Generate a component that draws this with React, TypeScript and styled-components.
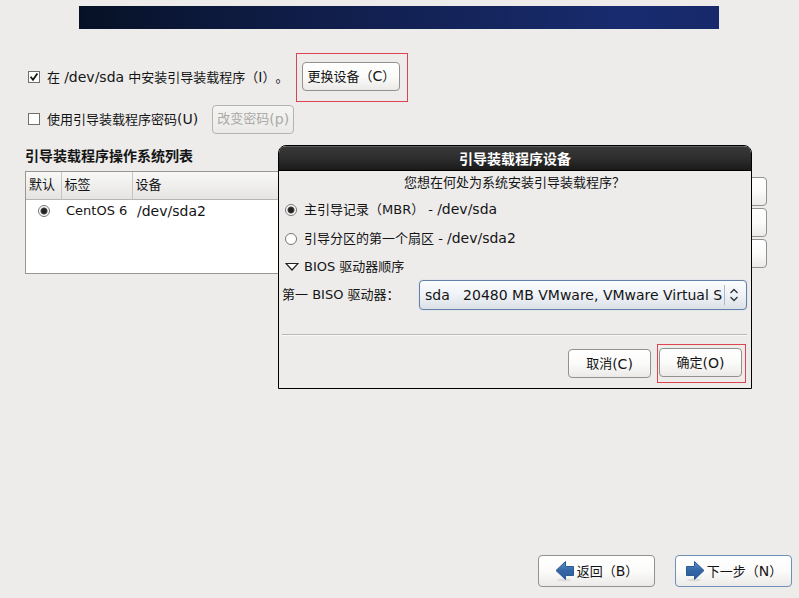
import React, { useState } from "react";
import styled, { createGlobalStyle, css } from "styled-components";

const GlobalStyle = createGlobalStyle`
  * { box-sizing: border-box; }
  body {
    margin: 0;
    background: #edeceb;
    color: #141414;
    font: 13px/20px "DejaVu Sans", "Noto Sans CJK SC", sans-serif;
    text-spacing-trim: space-all;
  }
  button, select, input { font: inherit; color: inherit; margin: 0; }
`;

const Page = styled.div`
  position: relative;
  display: flex;
  flex-direction: column;
  min-height: 100vh;
  padding-top: 6px;
`;

const Banner = styled.header`
  height: 23px;
  margin: 0 80px 0 79px;
  background: linear-gradient(90deg, #061025 0%, #0c1839 18%, #111f4e 42%, #15265e 65%, #182b6e 85%, #17296a 100%);
`;

const Main = styled.main`
  padding: 24px 32px 0 25px;
`;

const OptionRow = styled.div<{ $tall?: boolean }>`
  display: flex;
  align-items: center;
  gap: ${(p) => (p.$tall ? 8 : 14)}px;
  height: ${(p) => (p.$tall ? 48 : 36)}px;
  padding-left: 3px;
`;

const Choice = styled.label`
  display: flex;
  align-items: center;
  gap: 7px;
  white-space: nowrap;
`;

const Latin = styled.span`
  font-size: 14px;
`;

const Tick = styled.input.attrs({ type: "checkbox" })`
  appearance: none;
  flex: none;
  width: 12px;
  height: 12px;
  border: 1px solid #6f6f6c;
  background: #fff;
  &:checked {
    background: #fff
      url("data:image/svg+xml,%3Csvg xmlns='http://www.w3.org/2000/svg' viewBox='0 0 10 10'%3E%3Cpath d='M1.6 4.8 4 7.8 8.4 1.4' fill='none' stroke='%23111' stroke-width='1.7'/%3E%3C/svg%3E")
      center / 10px 10px no-repeat;
  }
`;

const Radio = styled.input.attrs({ type: "radio" })`
  appearance: none;
  flex: none;
  width: 12px;
  height: 12px;
  border: 1px solid #767674;
  border-radius: 50%;
  background: #fff;
  &:checked {
    background: radial-gradient(circle, #222 0 2px, #444 3px, #fff 4px);
  }
`;

const Button = styled.button<{ $width?: number; $large?: boolean; $focus?: boolean }>`
  display: flex;
  align-items: center;
  justify-content: center;
  gap: ${(p) => (p.$large ? 2 : 0)}px;
  flex: none;
  height: ${(p) => (p.$large ? 32 : 29)}px;
  ${(p) => p.$width && css`width: ${p.$width}px;`}
  padding: 0 4px;
  border: 1px solid ${(p) => (p.$focus ? "#7090b8" : "#91918e")};
  border-radius: 4px;
  background: linear-gradient(#ffffff, #fbfbfa 50%, #ebeae9);
  white-space: nowrap;
  &:disabled {
    border-color: #b4b3b1;
    background: linear-gradient(#f4f4f3, #ebeae8);
    color: #aaa9a7;
  }
`;

const Highlight = styled.div<{ $tight?: boolean }>`
  display: flex;
  border: 1px solid #dc4450;
  padding: ${(p) => (p.$tight ? "3px 3px 5px 1px" : "8px 7px 10px 5px")};
`;

const ListTitle = styled.h2`
  margin: 8px 0 6px;
  font-size: 14px;
  line-height: 20px;
  font-weight: 700;
  font-family: "Noto Sans CJK SC", sans-serif;
`;

const ListArea = styled.section`
  display: flex;
  gap: 6px;
`;

const TableFrame = styled.div`
  flex: 1;
  height: 103px;
  border: 1px solid #979794;
  background: #fff;
`;

const Table = styled.table`
  width: 100%;
  border-collapse: collapse;
  table-layout: fixed;
  th {
    height: 27px;
    padding: 0 3px;
    font-weight: 400;
    text-align: left;
    background: linear-gradient(#f8f8f7, #e5e4e2);
    border-bottom: 1px solid #b6b5b2;
  }
  th + th { border-left: 1px solid #c6c5c2; }
  td { height: 24px; padding: 0 5px; white-space: nowrap; }
  td:first-child { padding-left: 12px; }
  td input { display: block; }
`;

const DefaultColumn = styled.col`width: 35px;`;
const LabelColumn = styled.col`width: 71px;`;

const SideButtons = styled.div`
  display: flex;
  flex-direction: column;
  gap: 2px;
  padding-top: 6px;
`;

const Dialog = styled.section`
  position: absolute;
  top: 145px;
  left: 278px;
  right: 47px;
  border: 1px solid #000;
  border-radius: 8px 8px 0 0;
  background: #edeceb;
  overflow: hidden;
`;

const DialogTitle = styled.h1`
  margin: 0;
  height: 25px;
  border-top: 1px solid #606060;
  border-bottom: 1px solid #000;
  background: linear-gradient(#383838, #2d2d2d 50%, #1a1a1a);
  color: #fff;
  font: 700 14px/22px "Noto Sans CJK SC", sans-serif;
  text-align: center;
`;

const DialogBody = styled.div`
  padding: 2px 4px 5px 3px;
`;

const Question = styled.p`
  margin: 0 0 2px;
  text-align: center;
`;

const RadioLine = styled.div`
  display: flex;
  align-items: center;
  height: 29px;
  padding-left: 3px;
`;

const Disclosure = styled.button`
  display: flex;
  align-items: center;
  gap: 5px;
  height: 27px;
  padding: 0 3px;
  border: 0;
  background: none;
`;

const DriveRow = styled.div`
  display: flex;
  align-items: center;
  justify-content: space-between;
  gap: 8px;
`;

const DriveLabel = styled.label`
  white-space: nowrap;
`;

const SelectBox = styled.div`
  position: relative;
  flex: 0 0 328px;
  height: 30px;
`;

const Select = styled.select`
  appearance: none;
  width: 100%;
  height: 30px;
  padding: 0 23px 0 5px;
  border: 1px solid #6380a8;
  border-radius: 4px;
  background: linear-gradient(#fbfcfd, #eff3f8 50%, #dce1e7);
  box-shadow: 0 0 1px #9eb6d6;
  font-size: 14px;
  text-overflow: clip;
`;

const SelectArrows = styled.span`
  position: absolute;
  top: 5px;
  right: 5px;
  width: 18px;
  height: 20px;
  border-left: 1px solid #b2b8c0;
  pointer-events: none;
  svg { display: block; margin: 3px 0 0 4px; }
`;

const Divider = styled.hr`
  margin: 24px 0 8px;
  border: 0;
  border-top: 1px solid #b9b8b5;
  border-bottom: 1px solid #f8f8f7;
`;

const DialogActions = styled.div`
  display: flex;
  justify-content: flex-end;
  align-items: center;
  gap: 6px;
  padding-right: 1px;
`;

const Footer = styled.footer`
  display: flex;
  justify-content: flex-end;
  gap: 20px;
  margin-top: auto;
  padding: 0 7px 11px;
`;

const Arrow = ({ back = false }: { back?: boolean }) => (
  <svg width="20" height="22" viewBox="0 0 20 22" aria-hidden="true">
    <defs>
      <linearGradient id={back ? "backFill" : "nextFill"} x1="0" y1="0" x2="0" y2="1">
        <stop offset="0" stopColor="#5f92cc" />
        <stop offset="0.5" stopColor="#3465a4" />
        <stop offset="1" stopColor="#2b5c9e" />
      </linearGradient>
    </defs>
    <ellipse cx="9" cy="20" rx="7" ry="1.5" fill="#dddcdb" />
    <path
      d={back ? "M1 10.5 10.5 1.5V6.5H18.5V15.5H10.5V19.5Z" : "M19 10.5 9.5 1.5V6.5H1.5V15.5H9.5V19.5Z"}
      fill={`url(#${back ? "backFill" : "nextFill"})`}
      stroke="#2c5894"
    />
  </svg>
);

export default function App() {
  const [install, setInstall] = useState(true);
  const [password, setPassword] = useState(false);
  const [target, setTarget] = useState("mbr");
  const [expanded, setExpanded] = useState(true);

  return (
    <>
      <GlobalStyle />
      <Page>
        <Banner />
        <Main>
          <OptionRow $tall>
            <Choice>
              <Tick checked={install} onChange={(e) => setInstall(e.target.checked)} />
              <span>在 <Latin>/dev/sda</Latin> 中安装引导装载程序（<Latin>I</Latin>）。</span>
            </Choice>
            <Highlight>
              <Button $width={98}><span>更换设备（<Latin>C</Latin>）</span></Button>
            </Highlight>
          </OptionRow>
          <OptionRow>
            <Choice>
              <Tick checked={password} onChange={(e) => setPassword(e.target.checked)} />
              <span>使用引导装载程序密码<Latin>(U)</Latin></span>
            </Choice>
            <Button disabled={!password} $width={82}>改变密码<Latin>(p)</Latin></Button>
          </OptionRow>
          <ListTitle>引导装载程序操作系统列表</ListTitle>
          <ListArea>
            <TableFrame>
              <Table>
                <colgroup>
                  <DefaultColumn />
                  <LabelColumn />
                  <col />
                </colgroup>
                <thead>
                  <tr>
                    <th>默认</th>
                    <th>标签</th>
                    <th>设备</th>
                  </tr>
                </thead>
                <tbody>
                  <tr>
                    <td><Radio name="default-os" defaultChecked aria-label="CentOS 6" /></td>
                    <td>CentOS 6</td>
                    <td><Latin>/dev/sda2</Latin></td>
                  </tr>
                </tbody>
              </Table>
            </TableFrame>
            <SideButtons>
              <Button $width={82} aria-label="添加" />
              <Button $width={82} aria-label="编辑" />
              <Button $width={82} aria-label="删除" />
            </SideButtons>
          </ListArea>
        </Main>

        <Dialog role="dialog" aria-labelledby="dialog-title">
          <DialogTitle id="dialog-title">引导装载程序设备</DialogTitle>
          <DialogBody>
            <Question>您想在何处为系统安装引导装载程序？</Question>
            <RadioLine>
              <Choice>
                <Radio name="target" checked={target === "mbr"} onChange={() => setTarget("mbr")} />
                <span>主引导记录（MBR） - <Latin>/dev/sda</Latin></span>
              </Choice>
            </RadioLine>
            <RadioLine>
              <Choice>
                <Radio name="target" checked={target === "boot"} onChange={() => setTarget("boot")} />
                <span>引导分区的第一个扇区 - <Latin>/dev/sda2</Latin></span>
              </Choice>
            </RadioLine>
            <Disclosure aria-expanded={expanded} onClick={() => setExpanded(!expanded)}>
              <svg width="14" height="10" viewBox="0 0 14 10" aria-hidden="true">
                <path d="M1 1.5H13L7 8Z" fill="#fff" stroke="#222" strokeWidth="1.2" />
              </svg>
              BIOS 驱动器顺序
            </Disclosure>
            <DriveRow>
              <DriveLabel htmlFor="drive">第一 BISO 驱动器：</DriveLabel>
              <SelectBox>
                <Select id="drive">
                  <option>{"sda\u00a0\u00a0\u00a020480 MB VMware, VMware Virtual S"}</option>
                </Select>
                <SelectArrows>
                  <svg width="10" height="14" viewBox="0 0 10 14" aria-hidden="true">
                    <path d="M1.5 5 5 1.5 8.5 5M1.5 9 5 12.5 8.5 9" fill="none" stroke="#333" strokeWidth="1.3" />
                  </svg>
                </SelectArrows>
              </SelectBox>
            </DriveRow>
            <Divider />
            <DialogActions>
              <Button $width={83}>取消<Latin>(C)</Latin></Button>
              <Highlight $tight>
                <Button $width={83}>确定<Latin>(O)</Latin></Button>
              </Highlight>
            </DialogActions>
          </DialogBody>
        </Dialog>

        <Footer>
          <Button $large $width={117}><Arrow back /><span>返回（<Latin>B</Latin>）</span></Button>
          <Button $large $focus $width={117}><Arrow /><span>下一步（<Latin>N</Latin>）</span></Button>
        </Footer>
      </Page>
    </>
  );
}
